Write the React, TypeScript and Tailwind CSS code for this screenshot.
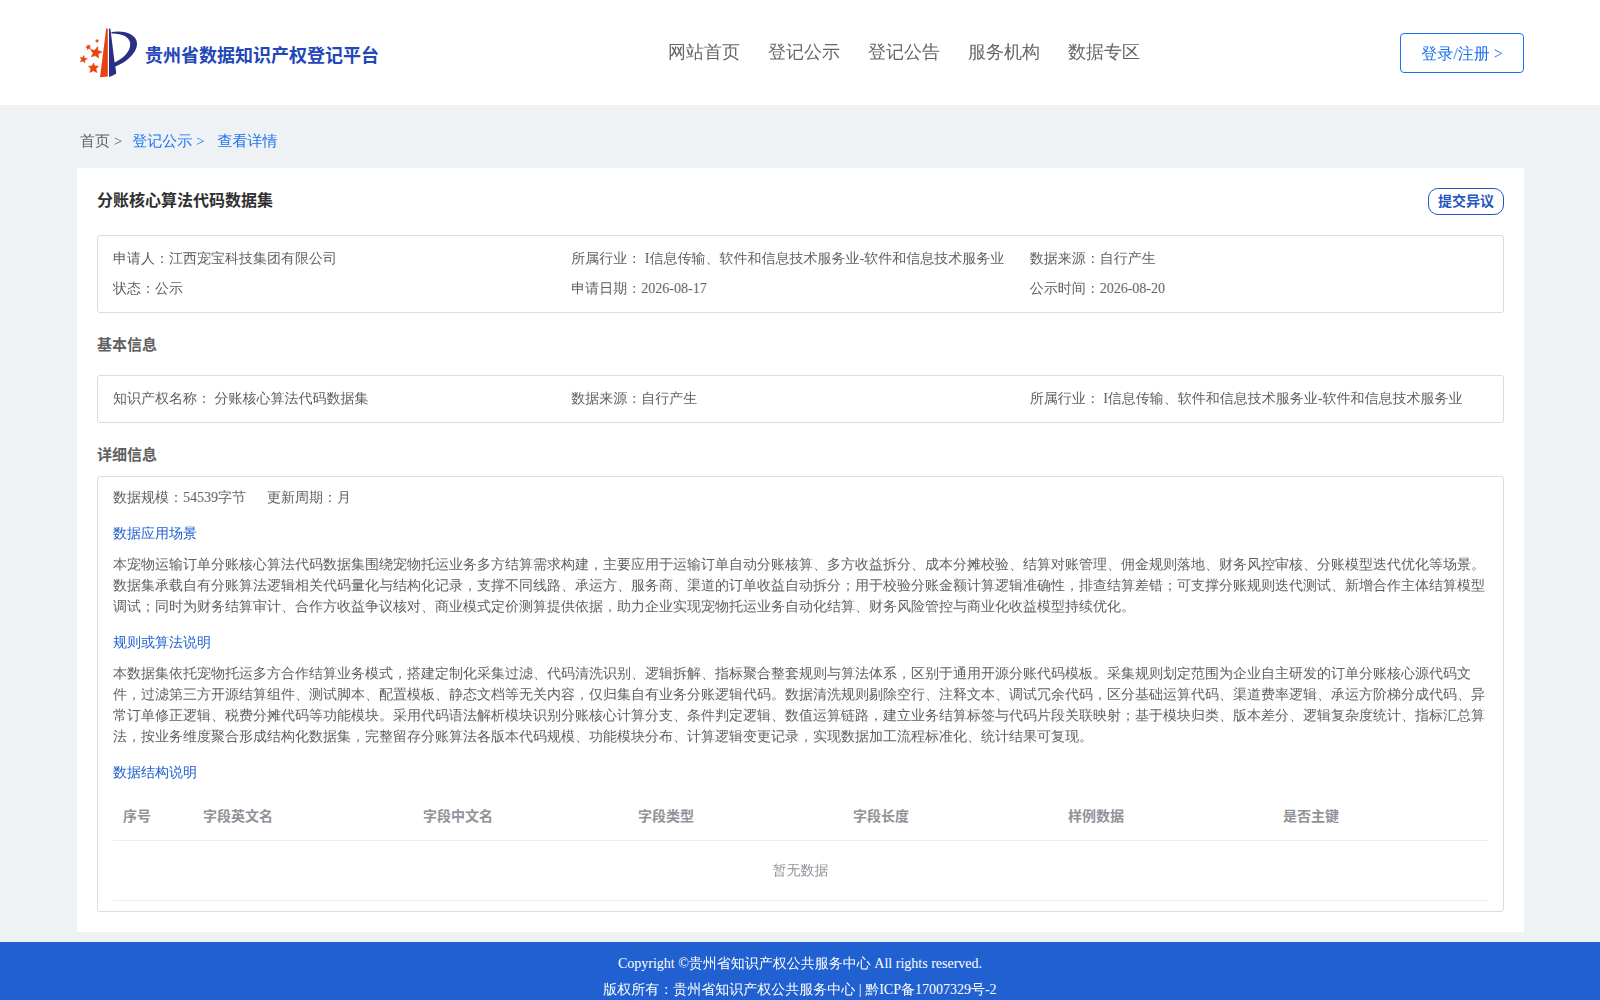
import type { ReactNode } from 'react';

const navItems = ['网站首页', '登记公示', '登记公告', '服务机构', '数据专区'];

const summary = [
  ['申请人：', '江西宠宝科技集团有限公司'],
  ['所属行业： ', 'I信息传输、软件和信息技术服务业-软件和信息技术服务业'],
  ['数据来源：', '自行产生'],
  ['状态：', '公示'],
  ['申请日期：', '2026-08-17'],
  ['公示时间：', '2026-08-20'],
];

const basics = [
  ['知识产权名称： ', '分账核心算法代码数据集'],
  ['数据来源：', '自行产生'],
  ['所属行业： ', 'I信息传输、软件和信息技术服务业-软件和信息技术服务业'],
];

const columns = ['字段中文名', '字段类型', '字段长度', '样例数据', '是否主键'];

const strong = "font-['Liberation_Serif','Noto_Sans_CJK_SC',serif] font-bold";

function Logo() {
  return (
    <svg viewBox="0 0 57 50" className="h-[50px] w-[57px] shrink-0" aria-hidden="true">
      <path d="M26.2 0.5 H27.8 V48.6 L20 49.2 Z" fill="#e8430f" />
      <path
        d="M29 0.5 L30.4 0.8 L34.6 34.6 C44 30 50.5 23.5 50.2 15.5 C49.6 8.6 42 5.2 31.5 5.4 L31.4 4 C45 1.8 56.8 6.4 57 15.5 C57.2 25 46 34.5 35.3 38.6 L36.3 45.4 C34.2 46.9 32 48 29 49 Z"
        fill="#2a2f86"
      />
      <g fill="#e8430f" stroke="#e8430f" strokeWidth="0.6" strokeLinejoin="round">
        <path d="M17.6 18.6 L17.9 22.4 L22 24 L18.2 25.8 L18.5 30 L15.3 27.6 L11.2 28.8 L13.2 25.2 L10.6 21.6 L14.8 22.3 Z" />
        <path d="M13.4 35 L14.7 38 L18.6 38.2 L15.8 40.7 L16.9 44.4 L13.3 42.8 L9.8 44.4 L10.9 40.7 L8.6 38.2 L12.2 38 Z" />
        <path d="M4 27.6 L4.4 30 L7.4 30.8 L4.8 32 L4.8 34.8 L2.8 33 L0.4 33.8 L1.6 31.4 L0.4 29.4 L2.6 29.8 Z" />
        <path d="M10.2 17.4 L9.6 19.1 L10.6 20.5 L8.8 20.4 L7.5 21.7 L7.3 19.9 L5.8 19 L7.4 18.4 L7.9 16.8 L8.9 18 Z" />
        <path d="M17.2 11.4 L17.7 12.2 L18.7 12.5 L17.9 13.3 L17.9 14.3 L17 13.8 L16 14 L16.3 13 L15.7 12.2 L16.8 12.2 Z" />
      </g>
    </svg>
  );
}

function InfoBox({ items }: { items: string[][] }) {
  return (
    <dl className="grid grid-cols-3 rounded-[3px] border border-[#dcdcdc] px-[15px] py-2 leading-[30px]">
      {items.map(([label, value]) => (
        <div key={label} className="flex whitespace-pre">
          <dt>{label}</dt>
          <dd>{value}</dd>
        </div>
      ))}
    </dl>
  );
}

function Topic({ title, children }: { title: string; children: ReactNode }) {
  return (
    <section>
      <h3 className="pt-[15px] pb-[10px] leading-[21px] text-[#2060d0]">{title}</h3>
      {children}
    </section>
  );
}

export default function App() {
  return (
    <div className="min-h-screen bg-[#eef2f5] font-['Liberation_Serif','WenQuanYi_Zen_Hei','Noto_Sans_CJK_SC',serif] text-sm text-[#606060]">
      <header className="flex h-[105px] items-center justify-between bg-white pr-[76px] pl-[77px]">
        <a href="#home" className="flex w-[331px] items-center pl-[3px] text-[18px] text-[#2346b8]">
          <Logo />
          <span className={`${strong} ml-2 pt-2 whitespace-nowrap`}>贵州省数据知识产权登记平台</span>
        </a>
        <nav className="flex gap-7 text-[18px] text-[#666666]">
          {navItems.map((item) => (
            <a key={item} href="#nav" className="whitespace-nowrap">
              {item}
            </a>
          ))}
        </nav>
        <button type="button" className="h-10 w-[124px] rounded border border-[#1c71f2] pt-0.5 text-base text-[#1c71f2]">
          登录/注册 &gt;
        </button>
      </header>

      <main className="pr-[76px] pb-[10px] pl-[77px]">
        <nav className="flex h-[63px] items-center gap-[10px] pt-[11px] pl-[3px] text-[15px] text-[#1c71f2]">
          <a href="#home" className="text-[#606060]">首页 &gt;</a>
          <a href="#list">登记公示 &gt;</a>
          <a href="#detail" className="pl-[3px]">查看详情</a>
        </nav>

        <article className="bg-white p-5">
          <div className="flex h-[47px] items-start justify-between">
            <h1 className={`${strong} text-base leading-[26px] text-[#303030]`}>分账核心算法代码数据集</h1>
            <button type="button" className={`${strong} h-[27px] w-[76px] rounded-[10px] border border-[#1f57c3] text-[#1f57c3]`}>
              提交异议
            </button>
          </div>

          <InfoBox items={summary} />
          <h2 className={`${strong} h-[62px] text-[15px] leading-[64px]`}>基本信息</h2>
          <InfoBox items={basics} />
          <h2 className={`${strong} h-[53px] text-[15px] leading-[64px]`}>详细信息</h2>

          <div className="rounded-[3px] border border-[#dcdcdc] px-[15px] py-[10px]">
            <p className="flex gap-[21px] leading-[21px]">
              <span>数据规模：54539字节</span>
              <span>更新周期：月</span>
            </p>
            <Topic title="数据应用场景">
              <p className="leading-[21px]">
                本宠物运输订单分账核心算法代码数据集围绕宠物托运业务多方结算需求构建，主要应用于运输订单自动分账核算、多方收益拆分、成本分摊校验、结算对账管理、佣金规则落地、财务风控审核、分账模型迭代优化等场景。数据集承载自有分账算法逻辑相关代码量化与结构化记录，支撑不同线路、承运方、服务商、渠道的订单收益自动拆分；用于校验分账金额计算逻辑准确性，排查结算差错；可支撑分账规则迭代测试、新增合作主体结算模型调试；同时为财务结算审计、合作方收益争议核对、商业模式定价测算提供依据，助力企业实现宠物托运业务自动化结算、财务风险管控与商业化收益模型持续优化。
              </p>
            </Topic>
            <Topic title="规则或算法说明">
              <p className="leading-[21px]">
                本数据集依托宠物托运多方合作结算业务模式，搭建定制化采集过滤、代码清洗识别、逻辑拆解、指标聚合整套规则与算法体系，区别于通用开源分账代码模板。采集规则划定范围为企业自主研发的订单分账核心源代码文件，过滤第三方开源结算组件、测试脚本、配置模板、静态文档等无关内容，仅归集自有业务分账逻辑代码。数据清洗规则剔除空行、注释文本、调试冗余代码，区分基础运算代码、渠道费率逻辑、承运方阶梯分成代码、异常订单修正逻辑、税费分摊代码等功能模块。采用代码语法解析模块识别分账核心计算分支、条件判定逻辑、数值运算链路，建立业务结算标签与代码片段关联映射；基于模块归类、版本差分、逻辑复杂度统计、指标汇总算法，按业务维度聚合形成结构化数据集，完整留存分账算法各版本代码规模、功能模块分布、计算逻辑变更记录，实现数据加工流程标准化、统计结果可复现。
              </p>
            </Topic>
            <Topic title="数据结构说明">
              <table className="w-full table-fixed text-left text-[#909399]">
                <thead>
                  <tr className="h-[47px] border-b border-[#ebeef5]">
                    <th className={`${strong} w-20 px-[10px] pt-0.5`}>序号</th>
                    <th className={`${strong} w-[220px] px-[10px] pt-0.5`}>字段英文名</th>
                    {columns.map((column) => (
                      <th key={column} className={`${strong} px-[10px] pt-0.5`}>{column}</th>
                    ))}
                  </tr>
                </thead>
                <tbody>
                  <tr className="h-[60px] border-b border-[#ebeef5]">
                    <td colSpan={7} className="pt-0.5 text-center">暂无数据</td>
                  </tr>
                </tbody>
              </table>
            </Topic>
          </div>
        </article>
      </main>

      <footer className="bg-[#2060d0] pt-[9px] text-center leading-[26px] text-white">
        <p>Copyright ©贵州省知识产权公共服务中心 All rights reserved.</p>
        <p>版权所有：贵州省知识产权公共服务中心 | 黔ICP备17007329号-2</p>
      </footer>
    </div>
  );
}
